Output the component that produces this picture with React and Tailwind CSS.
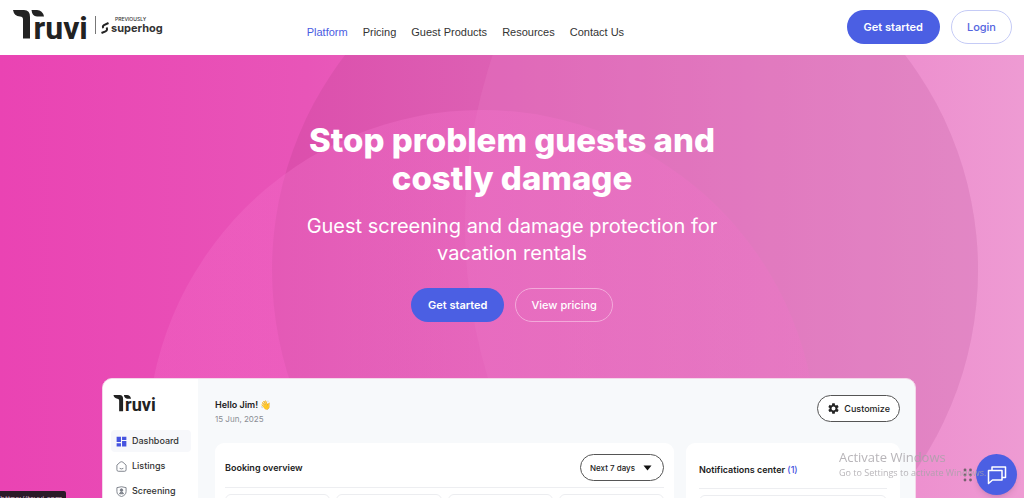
import { MdDashboard, MdSettings } from "react-icons/md";

const navItems = ["Platform", "Pricing", "Guest Products", "Resources", "Contact Us"];

function TruviLogo({ className }) {
  return (
    <svg viewBox="0 0 76 30" className={"overflow-visible " + className} role="img" aria-label="Truvi" fill="#222">
      <path d="M0 0H11Q17 0 17 7V28.500H10V9.500Q10 6.500 7 6.500Q1 6 0 0Z" />
      <path d="M18.500 0H24Q29.500 0 31 6.500H24Q19 6 18.500 0Z" />
      <text x="20.500" y="28.500" fontSize="32" fontWeight="700" fontFamily="Roboto, sans-serif">
        ruvi
      </text>
    </svg>
  );
}

function HeroBackdrop() {
  return (
    <svg
      className="absolute inset-0 h-full w-full"
      viewBox="0 55 1024 443"
      preserveAspectRatio="xMidYMin slice"
      aria-hidden="true"
    >
      <defs>
        <linearGradient id="base" gradientUnits="userSpaceOnUse" x1="0" y1="0" x2="1024" y2="0">
          <stop offset="0" stopColor="#ea43b3" />
          <stop offset="0.300" stopColor="#e855b8" />
          <stop offset="1" stopColor="#ee9bd3" />
        </linearGradient>
        <linearGradient id="disc" gradientUnits="userSpaceOnUse" x1="272" y1="0" x2="979" y2="0">
          <stop offset="0" stopColor="#dc4dac" />
          <stop offset="1" stopColor="#df8ac4" />
        </linearGradient>
        <linearGradient id="glow" gradientUnits="userSpaceOnUse" x1="147" y1="0" x2="817" y2="0">
          <stop offset="0" stopColor="#f472cb" stopOpacity="0.300" />
          <stop offset="0.500" stopColor="#f472cb" stopOpacity="0.380" />
          <stop offset="1" stopColor="#f472cb" stopOpacity="0.240" />
        </linearGradient>
        <clipPath id="discClip">
          <circle cx="625" cy="270" r="353" />
        </clipPath>
      </defs>
      <rect x="0" y="55" width="1024" height="700" fill="url(#base)" />
      <circle cx="625" cy="270" r="353" fill="url(#disc)" />
      <g clipPath="url(#discClip)">
        <circle cx="995" cy="224" r="530" fill="#ea80c8" opacity="0.250" />
      </g>
      <circle cx="482" cy="445" r="335" fill="url(#glow)" />
    </svg>
  );
}

function Header() {
  return (
    <header className="flex h-[55px] shrink-0 items-start bg-white pr-3 pl-[13px]">
      <a href="#home" className="flex items-center pt-[10px]">
        <TruviLogo className="h-[30px] w-[76px]" />
        <span className="ml-[6px] h-[18px] w-px bg-[#777]" />
        <svg viewBox="0 0 8 12" className="mt-[5px] ml-[5px] h-3 w-2" fill="none" stroke="#222" strokeWidth="2" aria-hidden="true">
          <path d="M7.500 1L3 3.200Q1 4.500 2.500 6M5.500 5.500Q7 8 4.500 9.300L0.500 11" />
        </svg>
        <span className="ml-[2px] flex flex-col font-['Inter',sans-serif] text-[#333]">
          <span className="pl-[4px] text-[5px] leading-[6px] font-medium">PREVIOUSLY</span>
          <span className="text-[11px] leading-[12px] font-bold">superhog</span>
        </span>
      </a>
      <nav className="ml-36 flex gap-[15px] pt-[22px] font-['Liberation_Sans',sans-serif] text-[11px] leading-5 whitespace-nowrap">
        {navItems.map((item, i) => (
          <a key={item} href={"#" + i} className={i === 0 ? "text-[#4a5ce2]" : "text-[#333]"}>
            {item}
          </a>
        ))}
      </nav>
      <div className="ml-auto flex gap-[11px] pt-[10px] font-['Inter',sans-serif] text-[11px]">
        <button className="h-[34px] rounded-full bg-[#4b5fe3] px-[17px] font-semibold text-white">Get started</button>
        <button className="h-[34px] rounded-full border border-[#c5cbf6] px-[15px] font-medium text-[#5465e0]">Login</button>
      </div>
    </header>
  );
}

function HouseIcon() {
  return (
    <svg viewBox="0 0 12 12" className="size-[11px]" fill="none" stroke="#777c85" aria-hidden="true">
      <path d="M1 4.500L4.500 1.300Q6 0.300 7.500 1.300L11 4.500V9.500Q11 11.200 9.500 11.200H2.500Q1 11.200 1 9.500ZM4 8Q6 9.300 8 8" />
    </svg>
  );
}

function ShieldIcon() {
  return (
    <svg viewBox="0 0 12 12" className="size-[11px]" fill="none" stroke="#777c85" aria-hidden="true">
      <path d="M1 1.800Q6 -0.200 11 1.800V6Q11 10 6 11.500Q1 10 1 6Z" />
      <circle cx="6" cy="4.500" r="1.400" fill="#777c85" />
      <path d="M3.800 8.500Q4 6.800 6 6.800T8.200 8.500Z" fill="#777c85" />
    </svg>
  );
}

function Sidebar() {
  const items = [
    { label: "Dashboard", icon: <MdDashboard className="-m-px size-[13px] text-[#4654e0]" /> },
    { label: "Listings", icon: <HouseIcon /> },
    { label: "Screening", icon: <ShieldIcon /> },
  ];
  return (
    <aside className="w-[95px] shrink-0 bg-white pt-4 pr-[7px] pl-[8px]">
      <TruviLogo className="ml-[2px] h-[17px] w-[44px]" />
      <ul className="mt-[18px] flex flex-col gap-[3px]">
        {items.map(({ label, icon }, i) => (
          <li key={label}>
            <a
              href={"#" + label}
              className={
                "flex h-[22px] items-center gap-[5px] rounded-[4px] pl-[5px] text-[9px] font-medium text-[#333] " +
                (i === 0 ? "bg-[#f7f8fb]" : "")
              }
            >
              {icon}
              {label}
            </a>
          </li>
        ))}
      </ul>
    </aside>
  );
}

function Dashboard() {
  return (
    <section className="relative mx-auto mt-[56px] flex h-[420px] w-[814px] max-w-full shrink-0 -translate-x-[3px] overflow-hidden rounded-[10px] border border-[#f4d7ea] bg-[#f7f9fb] font-['Inter',sans-serif] text-[#222]">
      <Sidebar />
      <div className="flex min-w-0 grow flex-col pr-[15px] pl-[17px]">
        <div className="flex items-start justify-between pt-4">
          <div className="pt-[3px]">
            <h2 className="text-[9px] leading-[14px] font-semibold">Hello Jim! 👋</h2>
            <p className="text-[8px] leading-[14px] text-[#8a8d94]">15 Jun, 2025</p>
          </div>
          <button className="flex h-[27px] items-center gap-[4px] rounded-full border border-[#555] bg-white px-[9px] text-[9px] font-medium">
            <MdSettings className="size-[13px]" />
            Customize
          </button>
        </div>
        <div className="mt-[17px] flex grow gap-3">
          <div className="grow rounded-[9px] bg-white px-[10px] pt-[11px]">
            <div className="flex items-center justify-between border-b border-[#edeef1] pb-[6px]">
              <h3 className="text-[9px] font-semibold">Booking overview</h3>
              <button className="flex h-[27px] items-center gap-2 rounded-full border border-[#555] pr-[11px] pl-[9px] text-[8px] font-medium">
                Next 7 days
                <svg viewBox="0 0 9 6" className="h-[6px] w-[9px]" fill="#111" aria-hidden="true">
                  <path d="M0.500 0.500H8.500L4.500 5.500Z" />
                </svg>
              </button>
            </div>
            <div className="mt-[6px] grid grid-cols-4 gap-[6px]">
              {[0, 1, 2, 3].map((n) => (
                <div key={n} className="h-16 rounded-[6px] border border-[#ecedf0]" />
              ))}
            </div>
          </div>
          <div className="w-[214px] shrink-0 rounded-[9px] bg-white px-[13px] pt-5">
            <h3 className="border-b border-[#edeef1] pb-[11px] text-[9px] leading-[14px] font-semibold">
              Notifications center <span className="font-medium text-[#4654e0]">(1)</span>
            </h3>
            <div className="mt-[6px] h-16 rounded-[6px] border border-[#ecedf0]" />
          </div>
        </div>
      </div>
    </section>
  );
}

export default function App() {
  return (
    <div className="flex h-screen flex-col overflow-hidden">
      <Header />
      <main className="relative flex min-h-0 grow flex-col overflow-hidden bg-[#ea43b3]">
        <HeroBackdrop />
        <div className="relative flex flex-col items-center pt-[66px] text-center font-['Inter',sans-serif] text-white">
          <h1 className="max-w-[440px] text-[33px] leading-[38px] font-extrabold">Stop problem guests and costly damage</h1>
          <p className="mt-4 max-w-[420px] text-[20px] leading-[27px]">Guest screening and damage protection for vacation rentals</p>
          <div className="mt-[21px] flex gap-[11px] text-[11px]">
            <button className="h-[34px] rounded-full bg-[#4b5fe3] px-[17px] font-semibold">Get started</button>
            <button className="h-[34px] rounded-full border border-[#f3a9da] px-[15px] font-medium">View pricing</button>
          </div>
        </div>
        <Dashboard />
      </main>
      <div className="fixed right-[7px] bottom-[3px] flex h-[41px] items-center gap-[3px]">
        <svg viewBox="0 0 10 14" className="h-[14px] w-[10px]" fill="#76616f" aria-hidden="true">
          {[2, 7, 12].map((y) => (
            <g key={y}>
              <circle cx="2" cy={y} r="1.400" />
              <circle cx="7.500" cy={y} r="1.400" />
            </g>
          ))}
        </svg>
        <button aria-label="Open chat" className="flex size-[41px] items-center justify-center rounded-full bg-[#4b5fe3] shadow-md">
          <svg viewBox="0 0 20 20" className="size-5" fill="none" stroke="white" strokeWidth="1.500" strokeLinejoin="round" aria-hidden="true">
            <path d="M1.500 5.500H15V15H5.500L1.500 18.500ZM5 5.500V2H18.500V12.500H15" />
          </svg>
        </button>
      </div>
      <div className="pointer-events-none fixed right-[35px] bottom-[18px] w-[150px] font-['Open_Sans',sans-serif] whitespace-nowrap text-[#a6a3a8]/80">
        <p className="text-[13px] leading-[18px]">Activate Windows</p>
        <p className="text-[9px] leading-[14px]">Go to Settings to activate Windows.</p>
      </div>
      <div className="fixed bottom-0 left-0 h-[7px] w-[66px] overflow-hidden rounded-tr-[2px] bg-[#2b1a28] pt-[2px] font-['Open_Sans',sans-serif] text-[8px] leading-[10px] text-[#d5b5cc]">
        https://truvi.com
      </div>
    </div>
  );
}
